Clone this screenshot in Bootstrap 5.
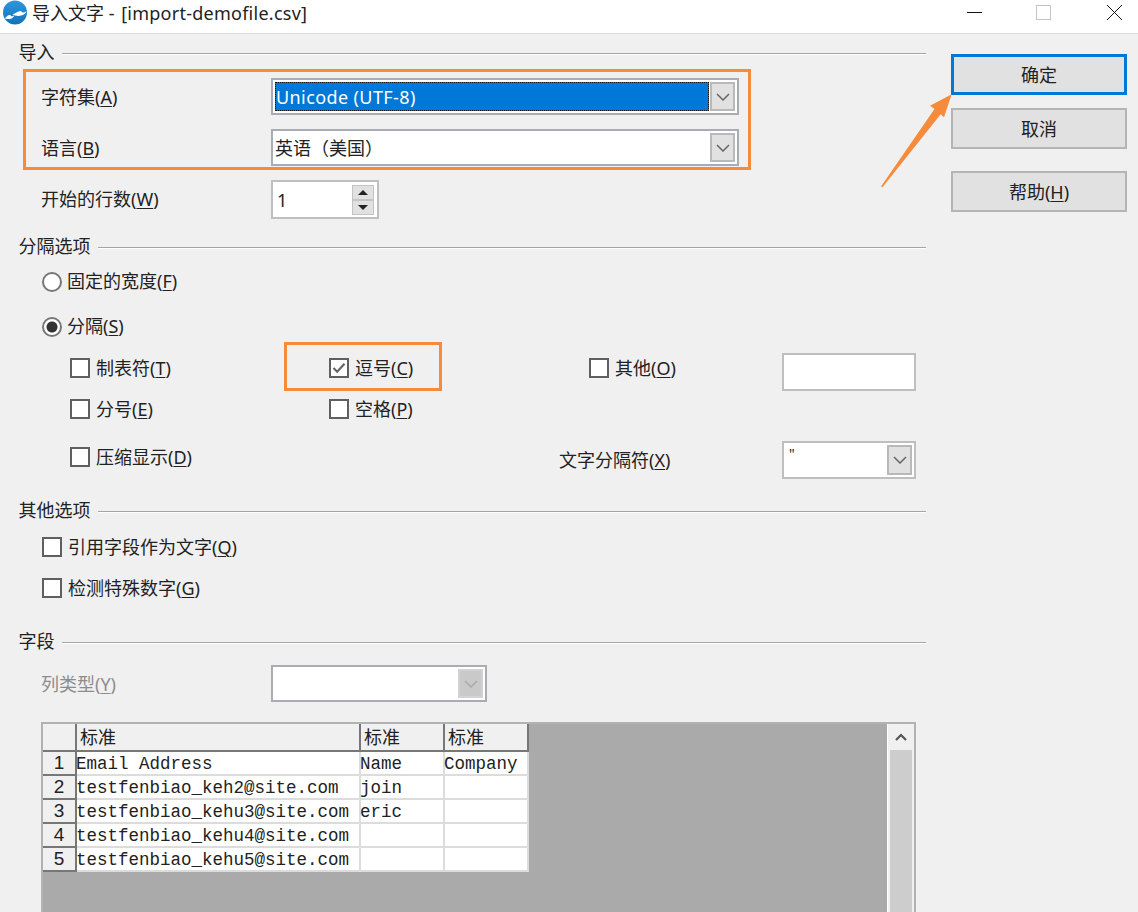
<!DOCTYPE html>
<html lang="zh-CN">
<head>
<meta charset="utf-8">
<title>导入文字</title>
<link href="https://cdn.jsdelivr.net/npm/bootstrap@5.3.0/dist/css/bootstrap.min.css" rel="stylesheet">
<style>
html,body{width:1138px;height:912px;overflow:hidden}
body{position:relative;margin:0;background:#f0f0f0;color:#222;font-family:"Noto Sans","Noto Sans CJK SC",sans-serif;font-size:18px;line-height:20px}
u{text-underline-offset:2px;text-decoration-thickness:1px}
.title-strip{height:34px;background:#fff;border-bottom:1px solid #d9dde1;padding:0 16px 8px 3px}
.title-strip .win-name{margin-left:4px}
.latin-wide{letter-spacing:.25px;margin-left:2px}
.win-min{margin-right:54px}.win-max{margin-right:56px}
.left-pane{width:951px;padding:0 25px 0 19px}
.right-pane{width:176px;padding-top:20px}
.sec-line{height:20px}
.sec-line::after{content:"";flex:1;margin:3px 0 0 7px;background:#a5a5a5;border-bottom:1px solid #fff;box-sizing:content-box;height:1px}
.sec-line>span{margin-left:-.5px}
.sec-a{margin-top:8px;margin-bottom:7px}
.sec-b{margin-top:17px}
.sec-c{margin-top:21px}
.sec-d{margin-top:33px}
.mark-box{border:3px solid #f68b3b}
.mark-wide{width:728px;height:101px;margin-left:4px;padding:6px 9px 0 15px}
.field-label{width:230px;flex:none}
.combo{height:37px;background:#fff;border:2px solid #a9acb1;padding:1px;box-shadow:inset 0 0 0 1px #fff}
.combo-text{padding:0 1px;white-space:nowrap;min-width:0}
.combo-sel{background:#0078d7;color:#fff;outline:1px dotted #111;outline-offset:-1px;margin:1px 0 1px 1px;padding-left:1px;letter-spacing:.4px}
.combo-btn{width:25px;flex:none;background:#e1e1e1;border:2px solid #b9b9b9;margin:1px 1px 1px 2px}
.combo-sel+.combo-btn{margin-left:1px}
.row-gap{margin-top:14px}
.combo-full{width:468px}
.spin-row{margin-top:10px;margin-left:22px;height:39px}
.spin-row .field-label{margin-top:-2px}
.spin{width:108px;height:39px;background:#fff;border:2px solid #bdbfc3;padding:3px 3px 3px 4px}
.spin-btns{width:22px;flex:none}
.spin-btn{height:15px;background:#e1e1e1;border:1px solid #c4c4c4}
.opt-radio{margin-left:23px}
.opt-radio label{margin-top:-2px}
.opt-r1{margin-top:16px}
.opt-r2{margin-top:25px}
.dlg-radio.form-check-input,.dlg-check.form-check-input{width:20px;height:20px;margin:0;flex:none;background-color:#fff;box-shadow:none}
.dlg-radio.form-check-input{border:2px solid #777;border-radius:50%;margin-right:5px}
.dlg-radio.form-check-input:checked{background-color:#fff;border-color:#777;background-image:radial-gradient(circle,#333 0,#333 5px,#fff 6px)}
.dlg-check.form-check-input{border:2px solid #5f5f5f;border-radius:0;margin-right:6px}
.dlg-check.form-check-input:checked{background-color:#fff;border-color:#5f5f5f;background-image:url("data:image/svg+xml,%3csvg xmlns='http://www.w3.org/2000/svg' viewBox='0 0 16 16'%3e%3cpath fill='none' stroke='%23666' stroke-width='2.200' d='M2.500 8l3.700 3.700 7.300-8'/%3e%3c/svg%3e");background-size:100%}
.opt-grid{display:grid;grid-template-columns:259px 230px 223px 134px;grid-template-rows:38px 50px 38px;margin:16px 0 0 51px;width:846px}
.gc-a{margin-top:5px}.gc-b{margin-top:8px}.gc-c{margin-top:6px}
.gc-far{padding-left:30px}
.text-box{background:#fff;border:2px solid #bdbfc3;height:38px}
.cell-mark{position:relative}
.mark-small{position:absolute;left:-45px;top:-16px;width:158px;height:49px;pointer-events:none}
.combo-small{height:38px;border-color:#bdbfc3}
.combo-small .combo-text{padding-left:4px;font-size:14px}
.opt-plain{margin-left:23px}
.opt-p1{margin-top:17px}.opt-p2{margin-top:21px}
.is-off{color:#8c8c8c}
.col-type{margin:14px 0 0 22px;height:37px}
.combo-off{width:216px}
.combo-off .combo-btn{background:#c9c9c9;border-color:#d2d2d2}
.grid-wrap{margin:20px 0 0 22px;width:875px;height:200px;border:2px solid #b2b2b2;background:#fff}
.grid-view{background:#aaa;min-width:0}
.scroll-col{width:27px;flex:none;background:#f0f0f0;padding:0 2px;border-left:1px solid #fff}
.scroll-up{height:26px}
.scroll-track{background:#cdcdcd}
.gcol-a{width:34px}.gcol-b{width:284px}.gcol-c{width:84px}
.data-grid.table{width:486px;table-layout:fixed;margin:0;border-collapse:separate;border-spacing:0;--bs-table-bg:transparent;font-family:"Liberation Mono",monospace;font-size:17.5px;color:#222}
.data-grid.table>:not(caption)>*>*{padding:2px 0 0 0;text-indent:-1px;height:24px;line-height:20px;background:#fff;border-width:0 2px 2px 0;border-style:solid;border-color:#dcdcdc;white-space:nowrap;box-shadow:none;color:#222;vertical-align:middle}
.data-grid.table>thead>tr>*{height:28px;background:#f0f0f0;border-color:#777;padding:0 0 2px 3px;line-height:22px;text-indent:0;font-family:"Noto Sans CJK SC",sans-serif;font-weight:400;font-size:18px}
.data-grid.table>tbody>tr>th{background:#f0f0f0;border-color:#777;font-family:"Liberation Sans",sans-serif;font-weight:400;font-size:19px;line-height:22px;text-align:center;padding:0;text-indent:0}
.dlg-btn.btn{display:block;width:176px;height:41px;padding:0;background:#e1e1e1;border:2px solid #b4b4b4;border-radius:0;color:#222;font-size:18px;line-height:20px;margin-bottom:13px}
.dlg-btn.btn-ok{border:3px solid #0078d7}
.dlg-btn.btn-help{margin-top:22px}
.hint-arrow{position:absolute;left:880px;top:92px;pointer-events:none}
</style>
</head>
<body>

<header class="title-strip d-flex align-items-center">
  <svg width="25" height="25" viewBox="0 0 25 25" aria-hidden="true">
    <defs><linearGradient id="lg" x1="0" y1="0" x2="0" y2="1"><stop offset="0" stop-color="#2e96dc"/><stop offset="1" stop-color="#1273bd"/></linearGradient></defs>
    <circle cx="12" cy="12.500" r="12" fill="url(#lg)"/>
    <path d="M2 18.500c1.500-2.500 3.500-4 5-3.500 1 .3 1 1.300 2 1.300.8 0 1.500-.5 2.500-1-1 2-2.500 3.700-5 3.800-1.500.1-3-.1-4.500-.6z" fill="#fff"/>
    <path d="M9.500 14.500c3-.8 5-3.500 8-3.500 1.200 0 1.300 1.500 2.500 1.500 1 0 2-.5 3.500-1-1.500 2.500-3.500 4-6.500 4.300-3 .3-5.500-.3-7.500-1.300z" fill="#fff"/>
  </svg>
  <span class="win-name">导入文字 - <span class="latin-wide">[import-demofile.csv]</span></span>
  <div class="ms-auto d-flex align-items-center">
    <svg class="win-min" width="15" height="15" viewBox="0 0 15 15"><path d="M0 7.500h15" stroke="#111"/></svg>
    <svg class="win-max" width="15" height="15" viewBox="0 0 15 15"><rect x=".5" y=".5" width="14" height="14" fill="none" stroke="#c4c4c4"/></svg>
    <svg width="15" height="15" viewBox="0 0 15 15"><path d="M0 0l15 15M15 0L0 15" stroke="#111"/></svg>
  </div>
</header>

<main class="d-flex">
  <section class="left-pane">
    <div class="sec-line sec-a d-flex align-items-center"><span>导入</span></div>

    <div class="mark-box mark-wide">
      <div class="d-flex align-items-center">
        <span class="field-label">字符集(<u>A</u>)</span>
        <div class="combo combo-full d-flex flex-grow-1">
          <div class="combo-text combo-sel flex-grow-1 d-flex align-items-center">Unicode (UTF-8)</div>
          <div class="combo-btn d-flex align-items-center justify-content-center"><svg width="14" height="8" viewBox="0 0 14 8"><path d="M1 1l6 6 6-6" fill="none" stroke="#666" stroke-width="1.500"/></svg></div>
        </div>
      </div>
      <div class="d-flex align-items-center row-gap">
        <span class="field-label">语言(<u>B</u>)</span>
        <div class="combo combo-full d-flex flex-grow-1">
          <div class="combo-text flex-grow-1 d-flex align-items-center">英语（美国）</div>
          <div class="combo-btn d-flex align-items-center justify-content-center"><svg width="14" height="8" viewBox="0 0 14 8"><path d="M1 1l6 6 6-6" fill="none" stroke="#666" stroke-width="1.500"/></svg></div>
        </div>
      </div>
    </div>

    <div class="spin-row d-flex align-items-center">
      <span class="field-label">开始的行数(<u>W</u>)</span>
      <div class="spin d-flex align-items-center">
        <span class="flex-grow-1">1</span>
        <div class="spin-btns d-flex flex-column">
          <div class="spin-btn d-flex align-items-center justify-content-center"><svg width="10" height="5" viewBox="0 0 10 5"><path d="M5 0l5 5H0z" fill="#222"/></svg></div>
          <div class="spin-btn d-flex align-items-center justify-content-center"><svg width="10" height="5" viewBox="0 0 10 5"><path d="M0 0h10L5 5z" fill="#222"/></svg></div>
        </div>
      </div>
    </div>

    <div class="sec-line sec-b d-flex align-items-center"><span>分隔选项</span></div>

    <div class="opt-radio opt-r1 d-flex align-items-center">
      <input class="form-check-input dlg-radio" type="radio" name="sep" id="r1">
      <label for="r1">固定的宽度(<u>F</u>)</label>
    </div>
    <div class="opt-radio opt-r2 d-flex align-items-center">
      <input class="form-check-input dlg-radio" type="radio" name="sep" id="r2" checked>
      <label for="r2">分隔(<u>S</u>)</label>
    </div>

    <div class="opt-grid">
      <div class="gc-a d-flex align-items-start"><input class="form-check-input dlg-check" type="checkbox" id="c1"><label for="c1">制表符(<u>T</u>)</label></div>
      <div class="gc-a d-flex align-items-start cell-mark">
        <div class="mark-box mark-small"></div>
        <input class="form-check-input dlg-check" type="checkbox" id="c2" checked><label for="c2">逗号(<u>C</u>)</label>
      </div>
      <div class="gc-a gc-far d-flex align-items-start"><input class="form-check-input dlg-check" type="checkbox" id="c3"><label for="c3">其他(<u>O</u>)</label></div>
      <div class="text-box"></div>

      <div class="gc-b d-flex align-items-start"><input class="form-check-input dlg-check" type="checkbox" id="c4"><label for="c4">分号(<u>E</u>)</label></div>
      <div class="gc-b d-flex align-items-start"><input class="form-check-input dlg-check" type="checkbox" id="c5"><label for="c5">空格(<u>P</u>)</label></div>
      <div></div><div></div>

      <div class="gc-c d-flex align-items-start"><input class="form-check-input dlg-check" type="checkbox" id="c6"><label for="c6">压缩显示(<u>D</u>)</label></div>
      <div></div>
      <div class="d-flex align-items-center">文字分隔符(<u>X</u>)</div>
      <div class="combo combo-small d-flex">
        <div class="combo-text flex-grow-1">"</div>
        <div class="combo-btn d-flex align-items-center justify-content-center"><svg width="14" height="8" viewBox="0 0 14 8"><path d="M1 1l6 6 6-6" fill="none" stroke="#666" stroke-width="1.500"/></svg></div>
      </div>
    </div>

    <div class="sec-line sec-c d-flex align-items-center"><span>其他选项</span></div>
    <div class="opt-plain opt-p1 d-flex align-items-center"><input class="form-check-input dlg-check" type="checkbox" id="c7"><label for="c7">引用字段作为文字(<u>Q</u>)</label></div>
    <div class="opt-plain opt-p2 d-flex align-items-center"><input class="form-check-input dlg-check" type="checkbox" id="c8"><label for="c8">检测特殊数字(<u>G</u>)</label></div>

    <div class="sec-line sec-d d-flex align-items-center"><span>字段</span></div>
    <div class="col-type d-flex align-items-center">
      <span class="field-label is-off">列类型(<u>Y</u>)</span>
      <div class="combo combo-off d-flex">
        <div class="combo-text flex-grow-1"></div>
        <div class="combo-btn d-flex align-items-center justify-content-center"><svg width="14" height="8" viewBox="0 0 14 8"><path d="M1 1l6 6 6-6" fill="none" stroke="#aaa" stroke-width="1.500"/></svg></div>
      </div>
    </div>

    <div class="grid-wrap d-flex">
      <div class="grid-view flex-grow-1">
        <table class="table data-grid">
          <colgroup><col class="gcol-a"><col class="gcol-b"><col class="gcol-c"><col class="gcol-c"></colgroup>
          <thead><tr><th></th><th>标准</th><th>标准</th><th>标准</th></tr></thead>
          <tbody>
            <tr><th>1</th><td>Email Address</td><td>Name</td><td>Company</td></tr>
            <tr><th>2</th><td>testfenbiao_keh2@site.com</td><td>join</td><td></td></tr>
            <tr><th>3</th><td>testfenbiao_kehu3@site.com</td><td>eric</td><td></td></tr>
            <tr><th>4</th><td>testfenbiao_kehu4@site.com</td><td></td><td></td></tr>
            <tr><th>5</th><td>testfenbiao_kehu5@site.com</td><td></td><td></td></tr>
          </tbody>
        </table>
      </div>
      <div class="scroll-col d-flex flex-column">
        <div class="scroll-up d-flex align-items-center justify-content-center"><svg width="12" height="8" viewBox="0 0 12 8"><path d="M1 7l5-5 5 5" fill="none" stroke="#555" stroke-width="2.200"/></svg></div>
        <div class="scroll-track flex-grow-1"></div>
      </div>
    </div>
  </section>

  <aside class="right-pane">
    <button type="button" class="btn dlg-btn btn-ok">确定</button>
    <button type="button" class="btn dlg-btn">取消</button>
    <button type="button" class="btn dlg-btn btn-help">帮助(<u>H</u>)</button>
  </aside>
</main>

<svg class="hint-arrow" width="74" height="98" viewBox="880 92 74 98" aria-hidden="true">
  <polygon points="881,186.500 934.500,109 930,105.700 951.700,94.300 944,117.300 940.700,114.300 882.500,187.200" fill="#f68b3b"/>
</svg>
</body>
</html>
